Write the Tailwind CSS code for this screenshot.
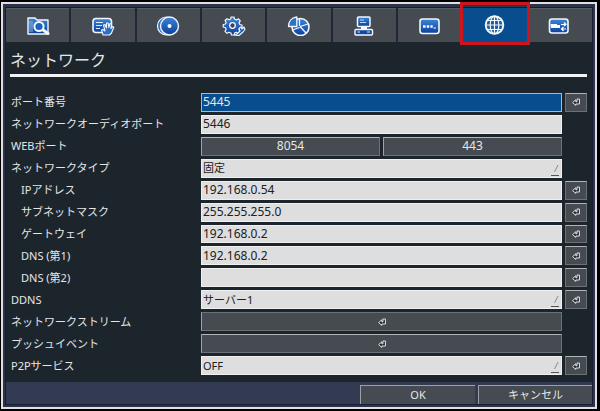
<!DOCTYPE html>
<html lang="ja">
<head>
<meta charset="utf-8">
<meta name="viewport" content="width=device-width, initial-scale=1">
<title>ネットワーク</title>
<script src="https://cdn.jsdelivr.net/npm/@tailwindcss/browser@4"></script>
</head>
<body class="bg-black font-['Noto_Sans','Noto_Sans_CJK_JP',sans-serif] text-[11px] text-[#e4e6e8]">
<svg class="absolute w-0 h-0" aria-hidden="true">
  <defs>
    <linearGradient id="blue" x1="0" y1="0" x2="0" y2="1"><stop offset="0" stop-color="#3c86d8"/><stop offset="1" stop-color="#0b3f9c"/></linearGradient>
    <symbol id="enter" viewBox="0 0 8 8">
      <path d="M5 1H7.4V6H3.8V7.4L.6 4.6L3.8 1.8V3.8H5Z" fill="#22282e" stroke="#e2e6e8" stroke-width="1"/>
    </symbol>
    <symbol id="drop" viewBox="0 0 8 12">
      <path d="M7 1L3.5 8" fill="none" stroke="#8a8a8a" stroke-width="1"/><path d="M0 11.5H8" stroke="#555" stroke-width="1"/>
    </symbol>
  </defs>
</svg>
<div class="min-h-screen flex flex-col pt-[2px] pb-[2px] pl-px pr-[3px]">
<main class="flex-1 flex flex-col border-2 border-[#e0e0e4] bg-[#2d3349] px-[2px] pt-[3px] pb-[2px]">
  <div class="flex-1 flex flex-col bg-[#1d252c] border border-[#171c33]">
    <nav class="grid grid-cols-9 gap-[2px] bg-[#20273a]" aria-label="設定">
      <button aria-label="検索" class="h-[34px] flex items-center justify-center bg-[#454b51] border-t border-[#555c62]">
        <svg class="w-6 h-5" viewBox="0 0 24 20"><path d="M2 18V2H9L11 4H22V18Z" fill="url(#blue)" stroke="#f2f7fc" stroke-width="1.4" stroke-linejoin="round"/><path d="M4 5V16M6 5V16" stroke="#bcdcf6" stroke-width=".7"/><path d="M16.500 13.500L22 17.500" stroke="#f2f7fc" stroke-width="3" stroke-linecap="round"/><circle cx="13" cy="10.500" r="4.600" fill="#1c63bd" stroke="#f2f7fc" stroke-width="2"/></svg>
      </button>
      <button aria-label="操作" class="h-[34px] flex items-center justify-center bg-[#454b51] border-t border-[#555c62]">
        <svg class="w-6 h-5" viewBox="0 0 24 20"><rect x="2" y="2.500" width="18.500" height="14" rx="3" fill="url(#blue)" stroke="#f2f7fc" stroke-width="1.600"/><path d="M5 6.500H12M5 9.500H11M5 12.500H9" stroke="#d9ecfb" stroke-width="1.200"/><path d="M12 19L10.500 14L12 13.500L14 15L12.500 9L14 8.500L15.500 12L15.500 7L17.200 7L17.800 11.500L19 7.500L20.500 8L20 12.500L21.500 10.500L22.800 11.200L20.500 17L18.500 19Z" fill="#2a6fc4" stroke="#f2f7fc" stroke-width="1.100" stroke-linejoin="round"/></svg>
      </button>
      <button aria-label="ディスク" class="h-[34px] flex items-center justify-center bg-[#454b51] border-t border-[#555c62]">
        <svg class="w-6 h-5" viewBox="0 0 24 20"><circle cx="10.500" cy="10" r="9" fill="#2a6fc4" stroke="#f2f7fc" stroke-width="1.200"/><circle cx="13.500" cy="10" r="9" fill="url(#blue)" stroke="#f2f7fc" stroke-width="1.400"/><circle cx="13.500" cy="10" r="2" fill="#fff"/></svg>
      </button>
      <button aria-label="システム" class="h-[34px] flex items-center justify-center bg-[#454b51] border-t border-[#555c62]">
        <svg class="w-6 h-5" viewBox="0 0 24 20"><path d="M9 1H12L12.500 3L14.500 4L16.500 2.800L18.300 4.800L17 6.800L17.800 8.500L20 9V11.500L17.800 12L17 13.800L18 15.500L16 17.500L14.200 16.200L12.500 17V19H9.500L9 17L7 16.200L5 17.300L3 15.300L4.200 13.500L3.500 11.700L1.200 11V8.500L3.500 8L4.200 6.500L3 4.500L5 2.700L7 3.800L8.700 3Z" fill="url(#blue)" stroke="#f2f7fc" stroke-width="1.200" stroke-linejoin="round"/><circle cx="10.500" cy="9.500" r="2.800" fill="#3a4550" stroke="#f2f7fc" stroke-width="1.300"/><path d="M12 19L14.500 18.500L18 15L17 12.500L19 11L20 13L22 11L23 13.500L21 16L17 19.500Z" fill="#1a5ab4" stroke="#f2f7fc" stroke-width="1.100" stroke-linejoin="round"/></svg>
      </button>
      <button aria-label="統計" class="h-[34px] flex items-center justify-center bg-[#454b51] border-t border-[#555c62]">
        <svg class="w-6 h-5" viewBox="0 0 24 20"><circle cx="13.500" cy="11" r="8.500" fill="url(#blue)" stroke="#f2f7fc" stroke-width="1.600"/><path d="M12.500 10V2M13 10.500L21 8M13 10.500L19 17M12.500 11.500L5.500 14" stroke="#f2f7fc" stroke-width="1.300"/><path d="M9.800 1V10.500H1.500C1.500 5 5 1.500 9.800 1Z" fill="#2a72c8" stroke="#f2f7fc" stroke-width="1.300" stroke-linejoin="round"/></svg>
      </button>
      <button aria-label="デバイス" class="h-[34px] flex items-center justify-center bg-[#454b51] border-t border-[#555c62]">
        <svg class="w-6 h-5" viewBox="0 0 24 20"><path d="M9 10H15V14H9Z" fill="#f2f7fc"/><rect x="5.500" y="1" width="12.500" height="9.500" rx="1" fill="url(#blue)" stroke="#f2f7fc" stroke-width="1.500"/><path d="M8 4H12M8 6.500H14" stroke="#bcdcf6"/><rect x="3" y="13.500" width="17.500" height="5.500" rx="1" fill="#12499f" stroke="#f2f7fc" stroke-width="1.400"/><path d="M5.500 16H8M15 16H18" stroke="#d9ecfb" stroke-width="1.200"/></svg>
      </button>
      <button aria-label="パスワード" class="h-[34px] flex items-center justify-center bg-[#454b51] border-t border-[#555c62]">
        <svg class="w-6 h-5" viewBox="0 0 24 20"><rect x="2" y="3" width="19" height="14.500" rx="2.500" fill="url(#blue)" stroke="#f2f7fc" stroke-width="1.600"/><path d="M5 10.500H7.500M8.700 10.500H11.200M12.400 10.500H14.700" stroke="#fff" stroke-width="2.600"/><path d="M15.500 12H18" stroke="#fff"/></svg>
      </button>
      <button aria-label="ネットワーク" aria-current="page" class="relative h-[34px] flex items-center justify-center bg-[#084e8f]">
        <svg class="w-6 h-5" viewBox="0 0 24 20" fill="none" stroke="#f2f7fc"><circle cx="11.500" cy="10" r="8.800" fill="#1f5c9c" stroke-width="1.900"/><ellipse cx="11.500" cy="10" rx="4.300" ry="8.800" stroke-width="1.200"/><path d="M11.500 1V19M2.500 10H20.500M4 5.500H19M4 14.500H19" stroke-width="1.200"/></svg>
        <span class="absolute -inset-x-[3px] -top-[6px] -bottom-[3px] border-[3px] border-[#d0141c]"></span>
      </button>
      <button aria-label="入出力" class="h-[34px] flex items-center justify-center bg-[#454b51] border-t border-[#555c62]">
        <svg class="w-6 h-5" viewBox="0 0 24 20"><rect x="1.500" y="3" width="18.500" height="14" rx="2.500" fill="url(#blue)" stroke="#f2f7fc" stroke-width="1.600"/><path d="M2.500 8H9V9H12V12H3Z" fill="#fff"/><path d="M13 8.500H18M16 6.500L18 8.500L16 10M18 13H13.500M15.500 11L13.500 13L15.500 15" fill="none" stroke="#fff" stroke-width="1.200"/></svg>
      </button>
    </nav>

    <header class="ml-1 mr-[5px] border-b-[3px] border-[#f2f3f4]">
      <h1 class="pt-[6px] pb-[2px] text-[16px] leading-6">ネットワーク</h1>
    </header>

    <form id="net" class="flex-1 grid grid-rows-[repeat(13,minmax(0,1fr))] gap-[3px] px-[5px] pt-4 pb-[7px] leading-4">
      <div class="grid grid-cols-[187px_1fr_22px] gap-x-[3px]">
        <label for="port" class="self-center">ポート番号</label>
        <input id="port" value="5445" class="min-w-0 h-0 min-h-full px-px border border-[#a9b8d0] bg-[#084e8f] text-[12px] text-[#e4e6e8] outline-none">
        <button type="button" aria-label="ポート番号の設定" class="flex items-center justify-center bg-[#454b51] border border-[#6a7177] border-t-[#b0b5b8]"><svg class="size-2"><use href="#enter"/></svg></button>
      </div>
      <div class="grid grid-cols-[187px_1fr_22px] gap-x-[3px]">
        <label for="audio" class="self-center">ネットワークオーディオポート</label>
        <input id="audio" value="5446" class="min-w-0 h-0 min-h-full px-px border border-[#f0f0f0] bg-[#dedede] text-[12px] text-[#202020] outline-none">
      </div>
      <div class="grid grid-cols-[187px_1fr_22px] gap-x-[3px]">
        <span class="self-center">WEBポート</span>
        <div class="grid grid-cols-2 gap-[3px] text-[12px]">
          <button type="button" class="flex items-center justify-center bg-[#454b51] border border-[#6a7177] border-t-[#b0b5b8] border-l-[#9da3a8]">8054</button>
          <button type="button" class="flex items-center justify-center bg-[#454b51] border border-[#6a7177] border-t-[#b0b5b8] border-l-[#9da3a8]">443</button>
        </div>
      </div>
      <div class="grid grid-cols-[187px_1fr_22px] gap-x-[3px]">
        <label for="type" class="self-center">ネットワークタイプ</label>
        <div class="relative">
          <select id="type" class="appearance-none block w-full h-0 min-h-full px-px border border-[#f0f0f0] bg-[#dedede] text-[#202020] outline-none"><option>固定</option></select>
          <svg class="pointer-events-none absolute right-[3px] bottom-[2px] w-2 h-3"><use href="#drop"/></svg>
        </div>
      </div>
      <div class="grid grid-cols-[187px_1fr_22px] gap-x-[3px]">
        <label for="ip" class="self-center pl-[10px]">IPアドレス</label>
        <input id="ip" value="192.168.0.54" class="min-w-0 h-0 min-h-full px-px border border-[#f0f0f0] bg-[#dedede] text-[12px] text-[#202020] outline-none">
        <button type="button" aria-label="IPアドレスの設定" class="flex items-center justify-center bg-[#454b51] border border-[#6a7177] border-t-[#b0b5b8]"><svg class="size-2"><use href="#enter"/></svg></button>
      </div>
      <div class="grid grid-cols-[187px_1fr_22px] gap-x-[3px]">
        <label for="mask" class="self-center pl-[10px]">サブネットマスク</label>
        <input id="mask" value="255.255.255.0" class="min-w-0 h-0 min-h-full px-px border border-[#f0f0f0] bg-[#dedede] text-[12px] text-[#202020] outline-none">
        <button type="button" aria-label="サブネットマスクの設定" class="flex items-center justify-center bg-[#454b51] border border-[#6a7177] border-t-[#b0b5b8]"><svg class="size-2"><use href="#enter"/></svg></button>
      </div>
      <div class="grid grid-cols-[187px_1fr_22px] gap-x-[3px]">
        <label for="gw" class="self-center pl-[10px]">ゲートウェイ</label>
        <input id="gw" value="192.168.0.2" class="min-w-0 h-0 min-h-full px-px border border-[#f0f0f0] bg-[#dedede] text-[12px] text-[#202020] outline-none">
        <button type="button" aria-label="ゲートウェイの設定" class="flex items-center justify-center bg-[#454b51] border border-[#6a7177] border-t-[#b0b5b8]"><svg class="size-2"><use href="#enter"/></svg></button>
      </div>
      <div class="grid grid-cols-[187px_1fr_22px] gap-x-[3px]">
        <label for="dns1" class="self-center pl-[10px]">DNS (第1)</label>
        <input id="dns1" value="192.168.0.2" class="min-w-0 h-0 min-h-full px-px border border-[#f0f0f0] bg-[#dedede] text-[12px] text-[#202020] outline-none">
        <button type="button" aria-label="DNS (第1)の設定" class="flex items-center justify-center bg-[#454b51] border border-[#6a7177] border-t-[#b0b5b8]"><svg class="size-2"><use href="#enter"/></svg></button>
      </div>
      <div class="grid grid-cols-[187px_1fr_22px] gap-x-[3px]">
        <label for="dns2" class="self-center pl-[10px]">DNS (第2)</label>
        <input id="dns2" value="" class="min-w-0 h-0 min-h-full px-px border border-[#f0f0f0] bg-[#dedede] text-[12px] text-[#202020] outline-none">
        <button type="button" aria-label="DNS (第2)の設定" class="flex items-center justify-center bg-[#454b51] border border-[#6a7177] border-t-[#b0b5b8]"><svg class="size-2"><use href="#enter"/></svg></button>
      </div>
      <div class="grid grid-cols-[187px_1fr_22px] gap-x-[3px]">
        <label for="ddns" class="self-center">DDNS</label>
        <div class="relative">
          <select id="ddns" class="appearance-none block w-full h-0 min-h-full px-px border border-[#f0f0f0] bg-[#dedede] text-[#202020] outline-none"><option>サーバー1</option></select>
          <svg class="pointer-events-none absolute right-[3px] bottom-[2px] w-2 h-3"><use href="#drop"/></svg>
        </div>
        <button type="button" aria-label="DDNSの設定" class="flex items-center justify-center bg-[#454b51] border border-[#6a7177] border-t-[#b0b5b8]"><svg class="size-2"><use href="#enter"/></svg></button>
      </div>
      <div class="grid grid-cols-[187px_1fr_22px] gap-x-[3px]">
        <label for="stream" class="self-center">ネットワークストリーム</label>
        <button id="stream" type="button" class="flex items-center justify-center bg-[#454b51] border border-[#6a7177] border-l-[#9da3a8]"><svg class="size-2"><use href="#enter"/></svg></button>
      </div>
      <div class="grid grid-cols-[187px_1fr_22px] gap-x-[3px]">
        <label for="push" class="self-center">プッシュイベント</label>
        <button id="push" type="button" class="flex items-center justify-center bg-[#454b51] border border-[#6a7177] border-t-[#b0b5b8] border-l-[#9da3a8]"><svg class="size-2"><use href="#enter"/></svg></button>
      </div>
      <div class="grid grid-cols-[187px_1fr_22px] gap-x-[3px]">
        <label for="p2p" class="self-center">P2Pサービス</label>
        <div class="relative">
          <select id="p2p" class="appearance-none block w-full h-0 min-h-full px-px border border-[#f0f0f0] bg-[#dedede] text-[#202020] outline-none"><option>OFF</option></select>
          <svg class="pointer-events-none absolute right-[3px] bottom-[2px] w-2 h-3"><use href="#drop"/></svg>
        </div>
        <button type="button" aria-label="P2Pサービスの設定" class="flex items-center justify-center bg-[#454b51] border border-[#6a7177] border-t-[#b0b5b8]"><svg class="size-2"><use href="#enter"/></svg></button>
      </div>
    </form>

    <footer class="flex justify-end gap-[3px] pt-[3px] bg-[#333b52] leading-4">
      <button type="submit" form="net" class="w-[115px] h-[19px] flex items-center justify-center bg-[#454b51] border-t border-l border-[#9a9fa8]">OK</button>
      <button type="button" class="w-[114px] h-[19px] flex items-center justify-center bg-[#454b51] border-t border-l border-[#9a9fa8]">キャンセル</button>
    </footer>
  </div>
</main>
</div>
</body>
</html>
